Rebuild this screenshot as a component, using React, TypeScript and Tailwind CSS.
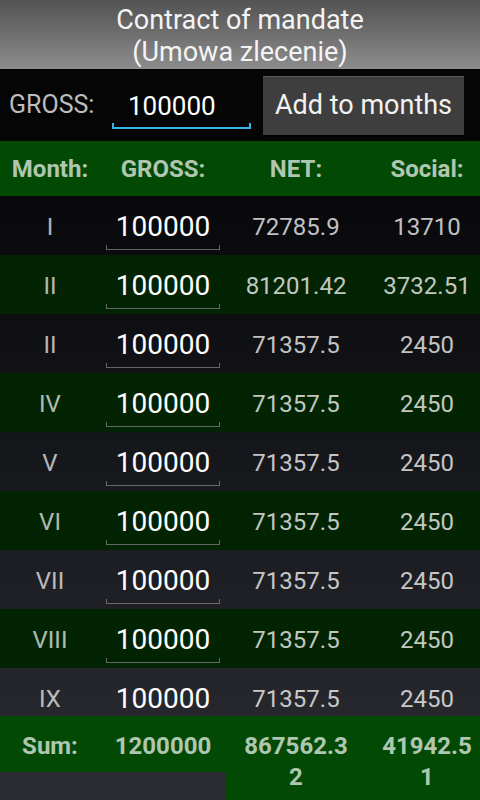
import React from "react";

const rows: [string, string, string][] = [
  ["I", "72785.9", "13710"],
  ["II", "81201.42", "3732.51"],
  ["II", "71357.5", "2450"],
  ["IV", "71357.5", "2450"],
  ["V", "71357.5", "2450"],
  ["VI", "71357.5", "2450"],
  ["VII", "71357.5", "2450"],
  ["VIII", "71357.5", "2450"],
  ["IX", "71357.5", "2450"],
];

const cols = "grid grid-cols-[100px_126px_140px_114px]";

export default function App() {
  return (
    <div className="w-[480px] h-[800px] overflow-hidden flex flex-col bg-gradient-to-b from-[#020203] to-[#2b2d33] font-['Roboto',sans-serif]">
      {/* Title */}
      <div className="h-[69px] shrink-0 bg-gradient-to-b from-[#535353] to-[#8d8d8d] flex flex-col items-center pt-[4px] text-[27px] leading-[32px] text-[#f4f4f4]">
        <div>Contract of mandate</div>
        <div>(Umowa zlecenie)</div>
      </div>

      {/* Input row */}
      <div className="h-[72px] shrink-0 bg-[#050505] flex items-center">
        <div className="w-[112px] pl-[9px] text-[25px] text-[#bdbdbd] leading-none pb-[1px]">GROSS:</div>
        <div className="w-[139px] flex flex-col pt-[9px]">
          <div className="pl-[16px] text-[26px] leading-[30px] text-white">100000</div>
          <div className="h-[6px] border-x-2 border-b-2 border-[#33b5e5] mt-[2px]" />
        </div>
        <div className="ml-[12px] w-[201px] h-[59px] bg-[#3e3e3e] border-t border-[#575757] flex items-center justify-center text-[27px] text-[#f2f2f2] shadow-[0_1px_1px_rgba(0,0,0,0.6)]">
          Add to months
        </div>
      </div>

      {/* Header */}
      <div className={`${cols} h-[55px] shrink-0 bg-[#024a04] items-center text-[24px] font-bold text-white/70 pt-[1px]`}>
        <div className="text-center">Month:</div>
        <div className="text-center">GROSS:</div>
        <div className="text-center">NET:</div>
        <div className="text-center pl-2">Social:</div>
      </div>

      {/* Rows */}
      <div className="flex-1 min-h-0 overflow-hidden flex flex-col relative">
        <div className="flex flex-col">
          {rows.map(([m, net, soc], i) => (
            <div
              key={i}
              className={`${cols} h-[59px] shrink-0 items-center ${i % 2 === 1 ? "bg-[#032403]" : ""}`}
            >
              <div className="text-center text-[24px] text-white/70 pt-[3px]">{m}</div>
              <div className="flex flex-col mx-[6px] pt-[10px]">
                <div className="text-center text-[28px] leading-[30px] text-white">100000</div>
                <div className="h-[5px] border-x border-b border-[#7a7a7a]/80 mt-[3px]" />
              </div>
              <div className="text-center text-[24px] text-white/75 pt-[3px]">{net}</div>
              <div className="text-center text-[24px] text-white/75 pl-2 pt-[3px]">{soc}</div>
            </div>
          ))}
        </div>
        {/* Sum row */}
        <div className={`${cols} absolute left-0 top-[520px] w-full items-start text-[24px] font-bold leading-[28px] text-white/70`}>
          <div className="bg-[#024a04] h-[56px] flex items-center justify-center pt-[3px]">Sum:</div>
          <div className="bg-[#024a04] h-[56px] flex items-center justify-center pt-[3px]">1200000</div>
          <div className="bg-[#024a04] pt-[15px] pb-[14px] text-center leading-[31px]">
            867562.3
            <br />2
          </div>
          <div className="bg-[#024a04] pt-[15px] pb-[14px] text-center pl-2 leading-[31px]">
            41942.5
            <br />1
          </div>
        </div>
      </div>
    </div>
  );
}
